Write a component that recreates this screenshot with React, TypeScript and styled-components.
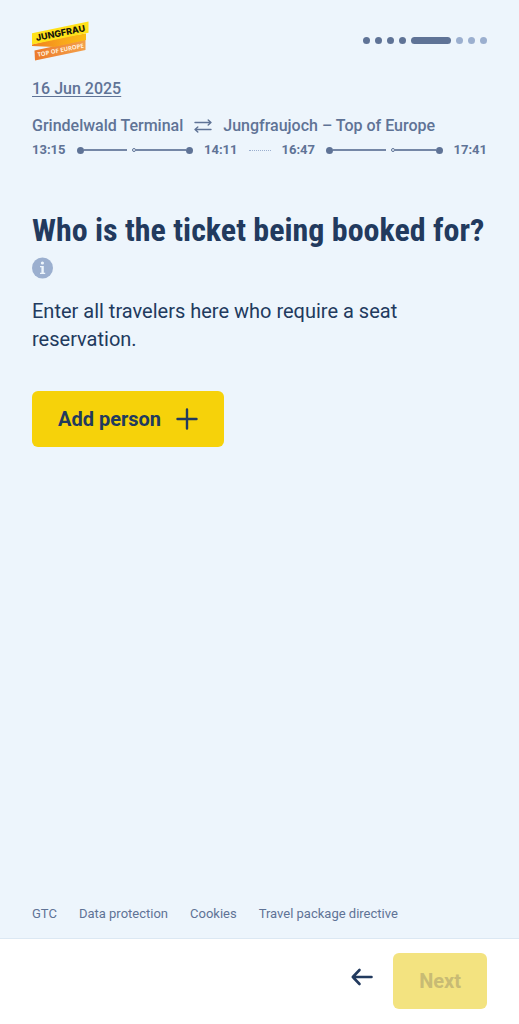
import React from "react";
import styled, { createGlobalStyle } from "styled-components";

const color = {
  page: "#edf5fc",
  ink: "#223a5e",
  muted: "#5f7396",
  pale: "#9bafcf",
  yellow: "#f6d20a",
  line: "#dce8f3",
};

const GlobalStyle = createGlobalStyle`
  * { box-sizing: border-box; }
  body {
    margin: 0;
    background: ${color.page};
    color: ${color.ink};
    font-family: Roboto, "Liberation Sans", sans-serif;
  }
`;

const Page = styled.div`
  display: flex;
  flex-direction: column;
  min-height: 100vh;
`;

const Header = styled.header`
  display: flex;
  justify-content: space-between;
  align-items: flex-start;
  padding: 20px 32px 0;
`;

const HomeLink = styled.a`
  display: block;
  svg { display: block; }
`;

const Steps = styled.ol`
  display: flex;
  gap: 5px;
  margin: 17px 0 0;
  padding: 0;
  list-style: none;
`;

const Step = styled.li<{ $state: "done" | "current" | "open" }>`
  width: ${(p) => (p.$state === "current" ? "40px" : "7px")};
  height: 7px;
  border-radius: 4px;
  background: ${(p) => (p.$state === "open" ? color.pale : color.muted)};
`;

const Trip = styled.section`
  padding: 17px 32px 0;
  color: ${color.muted};
  font-weight: 500;
`;

const DateLink = styled.a`
  display: block;
  width: fit-content;
  color: inherit;
  font-size: 16px;
  line-height: 20px;
  text-decoration: underline;
  text-underline-offset: 2px;
`;

const Route = styled.div`
  display: flex;
  align-items: center;
  gap: 11px;
  margin-top: 17px;
  font-size: 16px;
  line-height: 20px;
  svg { display: block; }
`;

const Times = styled.div`
  display: flex;
  align-items: center;
  gap: 11px;
  margin-top: 6px;
  font-size: 13px;
  line-height: 16px;
  font-weight: 700;
`;

const Leg = styled.div`
  display: flex;
  flex: 1;
  align-items: center;
`;

const Stop = styled.span`
  width: 7px;
  height: 7px;
  border-radius: 50%;
  background: ${color.muted};
`;

const Change = styled.span`
  width: 4px;
  height: 4px;
  margin-left: 5px;
  border: 1px solid ${color.muted};
  border-radius: 50%;
`;

const Track = styled.span<{ $share: number }>`
  flex: ${(p) => p.$share};
  height: 2px;
  background: ${color.muted};
  opacity: 0.85;
`;

const Stay = styled.span`
  width: 22px;
  border-top: 1px dotted ${color.pale};
`;

const Main = styled.main`
  flex: 1;
  padding: 52px 32px 32px;
`;

const Title = styled.h1`
  margin: 0;
  font-family: "Roboto Condensed", Roboto, "Liberation Sans", sans-serif;
  font-size: 32px;
  line-height: 40px;
  font-weight: 700;
`;

const InfoButton = styled.button`
  display: block;
  margin: 7px 0 0;
  padding: 0;
  border: 0;
  background: none;
  svg { display: block; }
`;

const Lead = styled.p`
  margin: 18px 0 0;
  font-size: 20px;
  line-height: 28px;
`;

const ActionButton = styled.button`
  display: flex;
  align-items: center;
  gap: 15px;
  height: 56px;
  padding: 0 26px;
  border: 0;
  border-radius: 6px;
  background: ${color.yellow};
  color: ${color.ink};
  font: 700 20px/24px Roboto, "Liberation Sans", sans-serif;

  &:disabled {
    background: #f3e380;
    color: #c8bb74;
  }
`;

const AddRow = styled.div`
  padding-top: 38px;
`;

const Legal = styled.nav`
  display: flex;
  gap: 22px;
  padding: 0 32px 16px;
`;

const LegalLink = styled.a`
  color: ${color.muted};
  font-size: 13px;
  line-height: 16px;
  text-decoration: none;
`;

const BottomBar = styled.footer`
  display: flex;
  justify-content: flex-end;
  align-items: center;
  gap: 20px;
  padding: 14px 32px 15px;
  border-top: 1px solid ${color.line};
  background: #fff;
`;

const BackButton = styled.button`
  display: block;
  padding: 0 0 8px;
  border: 0;
  background: none;
  svg { display: block; }
`;

function Logo() {
  return (
    <svg width="58" height="42" viewBox="0 0 58 42" aria-hidden="true">
      <defs>
        <linearGradient id="fold" x1="0" x2="1">
          <stop offset="0" stopColor="#ef7f1f" />
          <stop offset="0.55" stopColor="#f9a51c" />
          <stop offset="1" stopColor="#fbbd12" />
        </linearGradient>
        <linearGradient id="lower" x1="0" x2="1">
          <stop offset="0" stopColor="#ec7a2c" />
          <stop offset="1" stopColor="#f3a04a" />
        </linearGradient>
      </defs>
      <path d="M2.5 30.5 53.5 19.5V30L3 40.5Z" fill="url(#lower)" />
      <path d="M0 24.5 30 17 54 13.5V20L22 27 0 26Z" fill="url(#fold)" />
      <path d="M0 13.2 56.5 1.5V12.8L0 24.5Z" fill="#ffe11a" />
      <g textAnchor="middle">
        <text x="28.5" y="16.2" fontFamily="Inter, Roboto, sans-serif" fontSize="9" fontWeight="800" fill="#17160a" transform="rotate(-11.5 28.5 13)">
          JUNGFRAU
        </text>
        <text x="28.5" y="32.2" fontFamily='"Open Sans", Roboto, sans-serif' fontSize="6" fontWeight="700" fill="#fff0dd" transform="rotate(-11.5 28.5 30)">
          TOP OF EUROPE
        </text>
      </g>
    </svg>
  );
}

function TripLeg({ before, after }: { before: number; after: number }) {
  return (
    <Leg aria-hidden="true">
      <Stop />
      <Track $share={before} />
      <Change />
      <Track $share={after} />
      <Stop />
    </Leg>
  );
}

const steps = ["done", "done", "done", "done", "current", "open", "open", "open"] as const;
const legalLinks = ["GTC", "Data protection", "Cookies", "Travel package directive"];

export default function App() {
  return (
    <Page>
      <GlobalStyle />
      <Header>
        <HomeLink href="#" aria-label="Jungfrau – Top of Europe">
          <Logo />
        </HomeLink>
        <Steps aria-label="Booking progress">
          {steps.map((state, i) => (
            <Step key={i} $state={state} aria-current={state === "current" ? "step" : undefined} />
          ))}
        </Steps>
      </Header>

      <Trip>
        <DateLink href="#">16 Jun 2025</DateLink>
        <Route>
          <span>Grindelwald Terminal</span>
          <svg width="18" height="14" viewBox="0 0 18 14" fill="none" stroke={color.muted} strokeWidth="1.4" strokeLinecap="round" strokeLinejoin="round" aria-hidden="true">
            <path d="M1 3.5H17M14.2 1 17 3.5 14.2 6M17 10.5H1M3.8 8 1 10.5 3.8 13" />
          </svg>
          <span>Jungfraujoch – Top of Europe</span>
        </Route>
        <Times>
          <span>13:15</span>
          <TripLeg before={7} after={8} />
          <span>14:11</span>
          <Stay />
          <span>16:47</span>
          <TripLeg before={9} after={7} />
          <span>17:41</span>
        </Times>
      </Trip>

      <Main>
        <Title>Who is the ticket being booked for?</Title>
        <InfoButton type="button" aria-label="More information">
          <svg width="21" height="22" viewBox="0 0 21 22" aria-hidden="true">
            <circle cx="10.5" cy="11" r="10.5" fill={color.pale} />
            <circle cx="10.4" cy="6" r="1.6" fill={color.page} />
            <path d="M8 9H11.8V15.8H13.2V17H8V15.8H9.4V10.2H8Z" fill={color.page} />
          </svg>
        </InfoButton>
        <Lead>Enter all travelers here who require a seat reservation.</Lead>
        <AddRow>
          <ActionButton type="button">
            Add person
            <svg width="22" height="22" viewBox="0 0 22 22" fill="none" stroke={color.ink} strokeWidth="2.4" strokeLinecap="round" aria-hidden="true">
              <path d="M11 1.5V20.5M1.5 11H20.5" />
            </svg>
          </ActionButton>
        </AddRow>
      </Main>

      <Legal aria-label="Legal">
        {legalLinks.map((label) => (
          <LegalLink key={label} href="#">{label}</LegalLink>
        ))}
      </Legal>

      <BottomBar>
        <BackButton type="button" aria-label="Back">
          <svg width="22" height="18" viewBox="0 0 22 18" fill="none" stroke={color.ink} strokeWidth="2.6" strokeLinecap="round" strokeLinejoin="round" aria-hidden="true">
            <path d="M20.5 9H1.8M8.5 2 1.8 9 8.5 16" />
          </svg>
        </BackButton>
        <ActionButton type="button" disabled>Next</ActionButton>
      </BottomBar>
    </Page>
  );
}
